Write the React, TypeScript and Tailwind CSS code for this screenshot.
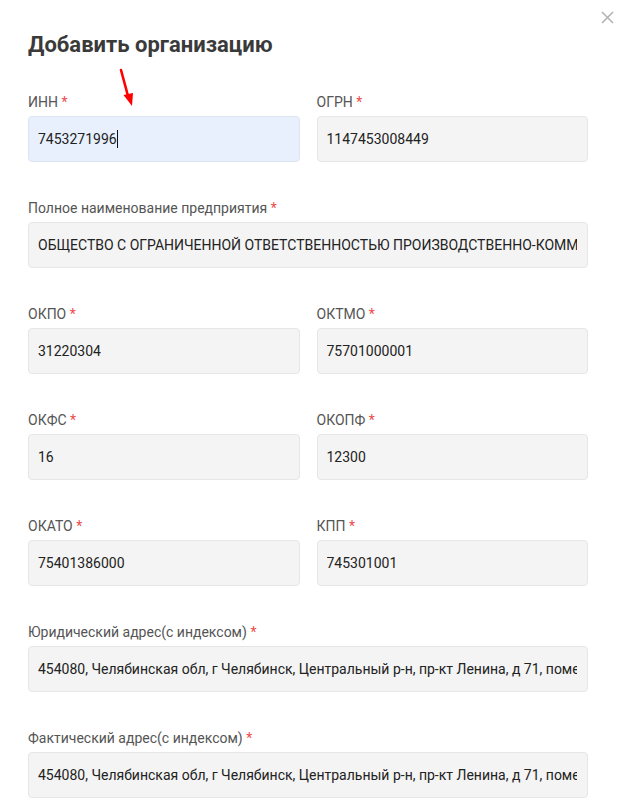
import React from "react";

type Field = { label: string; value: string; focused?: boolean };

const font = { fontFamily: "Roboto, 'Noto Sans', sans-serif" };

function Input({ f }: { f: Field }) {
  return (
    <div className="flex flex-col">
      <div className="h-5 text-[14px] leading-5 text-[#555555] whitespace-nowrap">
        {f.label} <span className="text-[#ee4b4b]">*</span>
      </div>
      <div
        className={
          "mt-1 h-[46px] rounded-[4px] border pl-[9px] pr-[10px] flex items-center " +
          (f.focused ? "bg-[#e8f0fe] border-[#dde5f2]" : "bg-[#f4f4f4] border-[#e6e6e6]")
        }
      >
        <div className="overflow-hidden whitespace-nowrap text-[14px] text-[#222222] flex items-center">
          <span>{f.value}</span>
          {f.focused && <span className="inline-block w-px h-[18px] bg-[#111111]" />}
        </div>
      </div>
    </div>
  );
}

export default function App() {
  const rows: Field[][] = [
    [
      { label: "ИНН", value: "7453271996", focused: true },
      { label: "ОГРН", value: "1147453008449" },
    ],
    [
      {
        label: "Полное наименование предприятия",
        value:
          "ОБЩЕСТВО С ОГРАНИЧЕННОЙ ОТВЕТСТВЕННОСТЬЮ ПРОИЗВОДСТВЕННО-КОММЕРЧЕСКАЯ ФИРМА",
      },
    ],
    [
      { label: "ОКПО", value: "31220304" },
      { label: "ОКТМО", value: "75701000001" },
    ],
    [
      { label: "ОКФС", value: "16" },
      { label: "ОКОПФ", value: "12300" },
    ],
    [
      { label: "ОКАТО", value: "75401386000" },
      { label: "КПП", value: "745301001" },
    ],
    [
      {
        label: "Юридический адрес(с индексом)",
        value:
          "454080, Челябинская обл, г Челябинск, Центральный р-н, пр-кт Ленина, д 71, помещ. 1",
      },
    ],
    [
      {
        label: "Фактический адрес(с индексом)",
        value:
          "454080, Челябинская обл, г Челябинск, Центральный р-н, пр-кт Ленина, д 71, помещ. 1",
      },
    ],
  ];

  return (
    <div className="relative w-[628px] h-[800px] overflow-hidden bg-white" style={font}>
      <div className="pl-[28px] pt-[32px] w-[588px]">
        <h1 className="text-[22px] leading-[26px] font-bold text-[#3a3a3a]">
          Добавить организацию
        </h1>
        <div className="mt-[34px] flex flex-col gap-[36px]">
          {rows.map((r, i) => (
            <div
              key={i}
              className={r.length === 2 ? "grid grid-cols-2 gap-[17px]" : "grid grid-cols-1"}
            >
              {r.map((f, j) => (
                <Input key={j} f={f} />
              ))}
            </div>
          ))}
        </div>
      </div>

      <svg
        className="absolute left-[600px] top-[10px]"
        width="15"
        height="15"
        viewBox="0 0 15 15"
      >
        <path d="M2 2 L13 13 M13 2 L2 13" stroke="#b3b3b3" strokeWidth="1.6" />
      </svg>

      <svg className="absolute left-[110px] top-[64px]" width="32" height="48" viewBox="0 0 32 48">
        <path d="M11 6 L18 32" stroke="#ff0000" strokeWidth="2.6" strokeLinecap="round" />
        <path d="M13.5 31 L23 29 L22 42 Z" fill="#ff0000" />
      </svg>
    </div>
  );
}
